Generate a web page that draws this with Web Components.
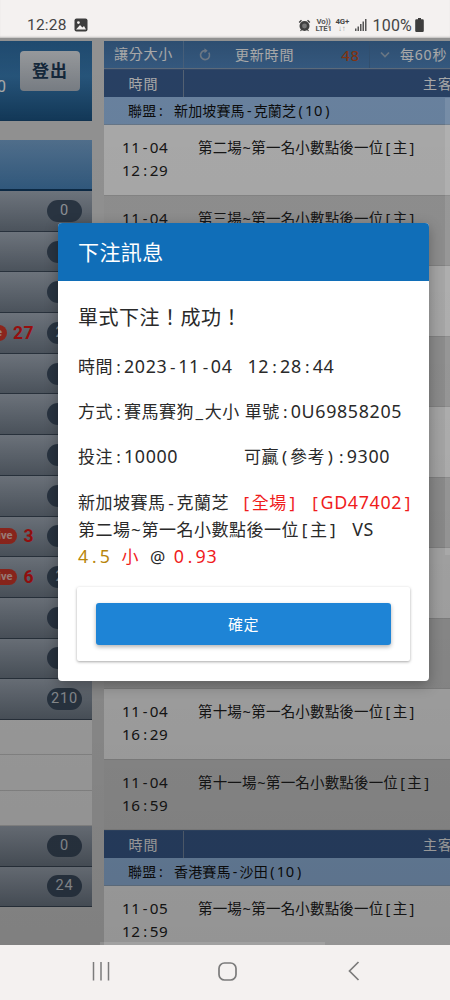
<!DOCTYPE html>
<html lang="zh-Hant">
<head>
<meta charset="utf-8">
<title>下注訊息</title>
<style>
html,body{margin:0;padding:0;width:450px;height:1000px;overflow:hidden;background:#f4f1f0;font-family:"Noto Sans","Noto Sans CJK TC",sans-serif}
phone-shell{height:1000px}
</style>
</head>
<body>
<phone-shell>
  <status-bar slot="top"></status-bar>
  <div slot="page" style="display:flex;height:100%">
    <side-panel></side-panel>
    <match-board></match-board>
  </div>
  <bet-dialog slot="dialog"></bet-dialog>
  <nav-bar slot="bottom"></nav-bar>
</phone-shell>

<script>
const FONT = '"Noto Sans","Noto Sans CJK TC",sans-serif';
/* the reference sets latin, digits and punctuation on an even, typewriter-like pitch */
const PITCH = `i{font-style:normal;display:inline-block;width:.64em;text-align:center;letter-spacing:0}.a{font-size:1.05em;line-height:1;letter-spacing:.037em}`;
const t = s => s.replace(/[:\-()\[\]~_.@]|[0-9A-Za-z]+/g, m => /^[0-9A-Za-z]/.test(m) ? `<span class="a">${m}</span>` : `<i>${m}</i>`);
function def(name, html, init){
  customElements.define(name, class extends HTMLElement{
    constructor(){super();this.attachShadow({mode:'open'}).innerHTML=html;}
    connectedCallback(){ if(init) init.call(this,this.shadowRoot); }
  });
}

def('phone-shell',`<style>
:host{display:flex;flex-direction:column;width:450px;position:relative;overflow:hidden}
.page{height:907px;position:relative;overflow:hidden;background:#dcdcdc}
.dim{position:absolute;inset:0;background:linear-gradient(180deg,rgba(0,0,0,.34) 0,rgba(0,0,0,.36) 40%,rgba(0,0,0,.42) 100%);padding:185px 0 0 58px;box-sizing:border-box}
.hs{position:absolute;left:100px;width:225px;bottom:0;height:3px;background:rgba(255,255,255,.12)}
.vs{position:absolute;right:0;top:60px;width:5px;height:457px;background:rgba(255,255,255,.1)}
</style>
<slot name="top"></slot>
<div class="page"><slot name="page"></slot>
<div class="dim"><slot name="dialog"></slot></div>
<div class="hs"></div><div class="vs"></div></div>
<slot name="bottom"></slot>`);

def('status-bar',`<style>
:host{display:flex;align-items:center;height:38px;padding:12px 26px 0 27px;box-sizing:border-box;background:#f4f1f0;color:#444;font-family:Roboto,${FONT};box-shadow:inset 0 -2px 2px -1px rgba(0,0,0,.22)}
.t{font-size:15.5px;letter-spacing:.2px}
svg{display:block;flex:none}
.sp{flex:1}
.s{flex:none;font:700 7.8px/7px Roboto,sans-serif;text-align:center;color:#555;white-space:nowrap;letter-spacing:-.2px}
.pct{font-size:16px;letter-spacing:.2px}
</style>
<span class="t">12:28</span>
<svg style="margin-left:7px" width="14" height="14" viewBox="0 0 14 14"><rect x=".5" y=".5" width="13" height="13" rx="2" fill="#3d3d3d"/><circle cx="4.4" cy="4.6" r="1.4" fill="#f4f1f0"/><path d="M2 11.5 6 7l2.4 2.6L10 8l2 3.5z" fill="#f4f1f0"/></svg>
<span class="sp"></span>
<svg width="13" height="13" viewBox="0 0 13 13"><circle cx="6.5" cy="7" r="5" fill="#3f3f3f"/><circle cx="6.5" cy="7" r="2.4" fill="#777"/><path d="M.7 3 3 .8l1 1L1.700 4zM12.300 3 10 .8l-1 1 2.300 2.200z" fill="#3f3f3f"/><path d="M2.500 12l1.200-1.500M10.500 12l-1.200-1.500" stroke="#3f3f3f" stroke-width="1.200"/></svg>
<div class="s" style="margin-left:5px;width:16px">Vo))<br>LTE1</div>
<div class="s" style="margin-left:4px;width:13px;color:#444">4G+<br><span style="color:#999">↓↑</span></div>
<svg style="margin-left:6px" width="12" height="12" viewBox="0 0 12 12" fill="#555"><rect x="0" y="9.500" width="1.500" height="2.500"/><rect x="2.500" y="7.500" width="1.500" height="4.500"/><rect x="5" y="5" width="1.500" height="7"/><rect x="7.500" y="2.500" width="1.500" height="9.500"/><rect x="10" y="0" width="1.500" height="12"/></svg>
<span class="pct" style="margin-left:6px">100%</span>
<svg style="margin-left:3px" width="9" height="14" viewBox="0 0 9 14"><path d="M3 0h3v1.200h1.600q1.200 0 1.200 1.200v10.400q0 1.200-1.200 1.200H1.400q-1.200 0-1.200-1.200V2.400q0-1.200 1.200-1.200H3z" fill="#3d3d3d"/></svg>`);

def('nav-bar',`<style>
:host{display:flex;height:55px;background:#f4f1f0;align-items:center;position:relative;padding-bottom:3px;box-sizing:border-box}
svg{display:block}
.i{flex:none;display:flex;justify-content:center}
</style>
<div class="i" style="margin-left:92px"><svg width="18" height="19" viewBox="0 0 18 19" stroke="#7b7b7b" stroke-width="1.500" fill="none"><path d="M1.500 0v18.500M9 0v18.500M16.500 0v18.500"/></svg></div>
<div class="i" style="margin-left:108px"><svg width="19" height="19" viewBox="0 0 19 19" fill="none" stroke="#7b7b7b" stroke-width="1.700"><rect x="1" y="1" width="17" height="17" rx="5.500"/></svg></div>
<div class="i" style="margin-left:111px"><svg width="12" height="20" viewBox="0 0 12 20" fill="none" stroke="#7b7b7b" stroke-width="1.700"><path d="M10.500 1 1.500 10l9 9"/></svg></div>`);

def('side-row',`<style>
:host{display:flex;align-items:center;justify-content:flex-end;height:40.7px;box-sizing:border-box;padding-right:10px;background:linear-gradient(180deg,#a8b2bf 0,#74808e 100%);border-bottom:1px solid #3e4c5c;overflow:hidden;white-space:nowrap}
.pill{flex:none;width:35px;height:22px;border-radius:11px;background:#3f5064;color:#d6dbe0;font:14.500px/22px Roboto,sans-serif;letter-spacing:.8px;text-align:center;overflow:hidden}
.live{flex:none;background:#d93a2c;color:#f3c5be;border-radius:8px;font:700 11px/16px Roboto,sans-serif;padding:0 5px;margin-right:6px}
.n{flex:none;color:#e81616;font:700 17.500px/22px Roboto,sans-serif;letter-spacing:.5px;margin-right:13px}
</style>`,function(s){
  if(s.querySelector('.pill'))return;
  const live=this.getAttribute('live');
  s.innerHTML+=(live?`<span class="live">Live</span><span class="n">${live}</span>`:'')+`<span class="pill">${this.getAttribute('count')}</span>`;
});

def('side-plain',`<style>:host{display:block;height:35.300px;box-sizing:border-box;background:#f7f7f7;border-bottom:1px solid #d2d2d2}</style>`);

def('side-panel',`<style>
:host{display:block;flex:none;width:92px;margin-right:12px;padding-top:3px;box-sizing:border-box;overflow:hidden;font-family:Roboto,${FONT}}
.user{height:80px;background:linear-gradient(180deg,#2f70a8 0,#3a7fb8 45%,#1c5585 100%);border-bottom:1px solid #1b4e7a;box-sizing:border-box;display:flex;align-items:flex-start;justify-content:flex-end;padding:10px 12px 0 0;color:#fff}
.cash{margin-right:14px;font-size:16px;margin-top:26px;width:6px;overflow:hidden;direction:rtl}
.out{width:60px;height:40px;border-radius:4px;background:linear-gradient(180deg,#e4e8ec,#b4bcc6);color:#203b58;font:700 17px/38px "Noto Sans CJK TC",sans-serif;text-align:center;letter-spacing:1px}
.head{height:51px;margin-top:19px;background:linear-gradient(180deg,#7aa8d4,#4a86bd);border-bottom:2px solid #123f68;box-sizing:border-box}
</style>
<div class="user"><span class="cash">0</span><span class="out">登出</span></div>
<div class="head"></div>
<side-row count="0"></side-row>
<side-row count="1"></side-row>
<side-row count="4"></side-row>
<side-row count="20" live="27"></side-row>
<side-row count="1"></side-row>
<side-row count="1"></side-row>
<side-row count="1"></side-row>
<side-row count="1"></side-row>
<side-row count="1" live="3"></side-row>
<side-row count="24" live="6"></side-row>
<side-row count="6"></side-row>
<side-row count="6"></side-row>
<side-row count="210"></side-row>
<side-plain></side-plain><side-plain></side-plain><side-plain></side-plain>
<side-row count="0"></side-row>
<side-row count="24"></side-row>`);

def('board-head',`<style>
:host{display:flex;height:28px;background:#3d6196;color:#fff;font:14px/27px ${FONT};letter-spacing:1px;white-space:nowrap;box-sizing:border-box;border-top:1px solid #4a6c9c}
.a{flex:none;width:80px;text-align:center;border-right:1px solid #7f93ad;box-sizing:border-box}
.b{flex:none;padding-left:239px}
</style><div class="a">時間</div><div class="b">主客</div>`);

def('league-row',`<style>
:host{display:flex;height:28px;align-items:center;background:#9ec4f0;color:#111;font:14px/28px ${FONT};letter-spacing:.01em;padding-left:24px;white-space:nowrap;border-bottom:1px solid #9ab2cc;box-sizing:border-box}
.lb{display:inline-block;width:46px}
${PITCH}
</style>`,function(s){
  if(s.querySelector('.lb'))return;
  s.innerHTML+=`<span class="lb">${t('聯盟:')}</span><span>${t(this.getAttribute('name'))}</span>`;
});

def('match-row',`<style>
:host{display:flex;height:70.500px;box-sizing:border-box;padding:11px 0 0 18px;background:#fff;color:#222;font:14.500px/23px ${FONT};letter-spacing:.012em;white-space:nowrap;border-bottom:1px solid #c8c8c8}
:host([alt]){background:#d8d8d8}
.d{flex:none;width:76px}
.e{flex:none}
${PITCH}
</style>`,function(s){
  if(s.querySelector('.d'))return;
  s.innerHTML+=`<div class="d">${t(this.getAttribute('day'))}<br>${t(this.getAttribute('time'))}</div><div class="e">${t(this.getAttribute('name'))}</div>`;
});

def('match-board',`<style>
:host{display:block;flex:none;width:346px;padding-top:3px;box-sizing:border-box;overflow:hidden}
.tool{display:flex;height:28px;background:linear-gradient(180deg,#4576ab,#5086bf);color:#fff;font:14px/26px ${FONT};letter-spacing:.800px;white-space:nowrap;box-sizing:border-box;border-bottom:1px solid #8ba1ba}
.c1{flex:none;width:80px;text-align:center;border-right:1px solid #6a8fb8;box-sizing:border-box}
.c2{flex:none;width:186px;display:flex;align-items:center;padding-left:15px;box-sizing:border-box;border-right:1px solid #4a78a8}
.c3{flex:none;display:flex;align-items:center;padding-left:10px}
.n{color:#c04e1c;font-size:15px;margin-left:47px;font-weight:500}
svg{display:block;flex:none}
</style>
<div class="tool"><div class="c1">讓分大小</div>
<div class="c2"><svg width="12" height="14" viewBox="0 0 12 14" fill="none" stroke="#a6b6c8" stroke-width="1.600"><path d="M9.800 4.600A4.500 4.500 0 1 1 6 2.600"/><path d="M5.500 .2v5l3.200-2.500z" fill="#a6b6c8" stroke="none"/></svg><span style="margin-left:24px">更新時間</span><span class="n">48</span></div>
<div class="c3"><svg width="10" height="8" viewBox="0 0 10 8" fill="none" stroke="#9fb3c8" stroke-width="1.700"><path d="M1 1.500l4 4 4-4"/></svg><span style="margin-left:10px">每60秒</span></div></div>
<board-head></board-head>
<league-row name="新加坡賽馬-克蘭芝(10)"></league-row>
<match-row day="11-04" time="12:29" name="第二場~第一名小數點後一位[主]"></match-row>
<match-row alt day="11-04" time="12:59" name="第三場~第一名小數點後一位[主]"></match-row>
<match-row day="11-04" time="13:29" name="第四場~第一名小數點後一位[主]"></match-row>
<match-row alt day="11-04" time="13:59" name="第五場~第一名小數點後一位[主]"></match-row>
<match-row day="11-04" time="14:29" name="第六場~第一名小數點後一位[主]"></match-row>
<match-row alt day="11-04" time="14:59" name="第七場~第一名小數點後一位[主]"></match-row>
<match-row day="11-04" time="15:29" name="第八場~第一名小數點後一位[主]"></match-row>
<match-row alt day="11-04" time="15:59" name="第九場~第一名小數點後一位[主]"></match-row>
<match-row day="11-04" time="16:29" name="第十場~第一名小數點後一位[主]"></match-row>
<match-row alt day="11-04" time="16:59" name="第十一場~第一名小數點後一位[主]"></match-row>
<board-head></board-head>
<league-row name="香港賽馬-沙田(10)"></league-row>
<match-row day="11-05" time="12:59" name="第一場~第一名小數點後一位[主]"></match-row>`);

def('bet-dialog',`<style>
:host{display:block;width:371px;height:458px;background:#fff;border-radius:4px;overflow:hidden;color:#2a2a2a;font:17px/27px ${FONT};letter-spacing:.03em;box-shadow:0 4px 14px rgba(0,0,0,.3)}
header{height:58px;background:#106eb8;color:#fff;font-size:21px;line-height:58px;padding-left:20px;letter-spacing:.4px}
.body{padding:0 19px 0 20px;display:flex;flex-direction:column}
h2{margin:21px 0 0;font-weight:400;font-size:20px;line-height:30px;letter-spacing:.5px;font-family:"Noto Sans CJK TC",sans-serif}
p{margin:0;white-space:nowrap}
.l{margin-top:18px}
.r{color:#f01c1c}.g{color:#b8860b}
.stake{display:inline-block;width:166px}
.card{margin:17px 0 0 -1px;width:333px;height:74px;box-sizing:border-box;padding:16px 19px;border-radius:2px;box-shadow:0 1px 3px rgba(0,0,0,.35)}
button{display:block;width:295px;height:42px;border:0;border-radius:3px;background:#1e84d6;color:#fff;font:15px/42px ${FONT};letter-spacing:.5px;box-shadow:0 2px 4px rgba(0,0,0,.3);padding:0}
.w1{margin-left:7px}.w2{margin-left:9px}.w3{margin-left:6px}.w4{margin-left:8px}.w5{margin-left:5px}
${PITCH}
</style>
<header>下注訊息</header>
<div class="body">
<h2>單式下注&#xFF01;成功&#xFF01;</h2>
<p style="margin-top:21px">${t('時間:2023-11-04')}&nbsp;&nbsp;<span class="w5">${t('12:28:44')}</span></p>
<p class="l">${t('方式:賽馬賽狗_大小 單號:0U69858205')}</p>
<p class="l"><span class="stake">${t('投注:10000')}</span>${t('可贏(參考):9300')}</p>
<p class="l" style="margin-top:19px">${t('新加坡賽馬-克蘭芝')} <span class="r w1">${t('[全場]')}</span> <span class="r w1">${t('[GD47402]')}</span></p>
<p>${t('第二場~第一名小數點後一位[主]')} <span class="w2">${t('VS')}</span></p>
<p><span class="g">${t('4.5')}</span> <span class="r w3">小</span> <span class="w3">${t('@')}</span> <span class="r w4">${t('0.93')}</span></p>
<div class="card"><button>確定</button></div>
</div>`);
</script>
</body>
</html>
